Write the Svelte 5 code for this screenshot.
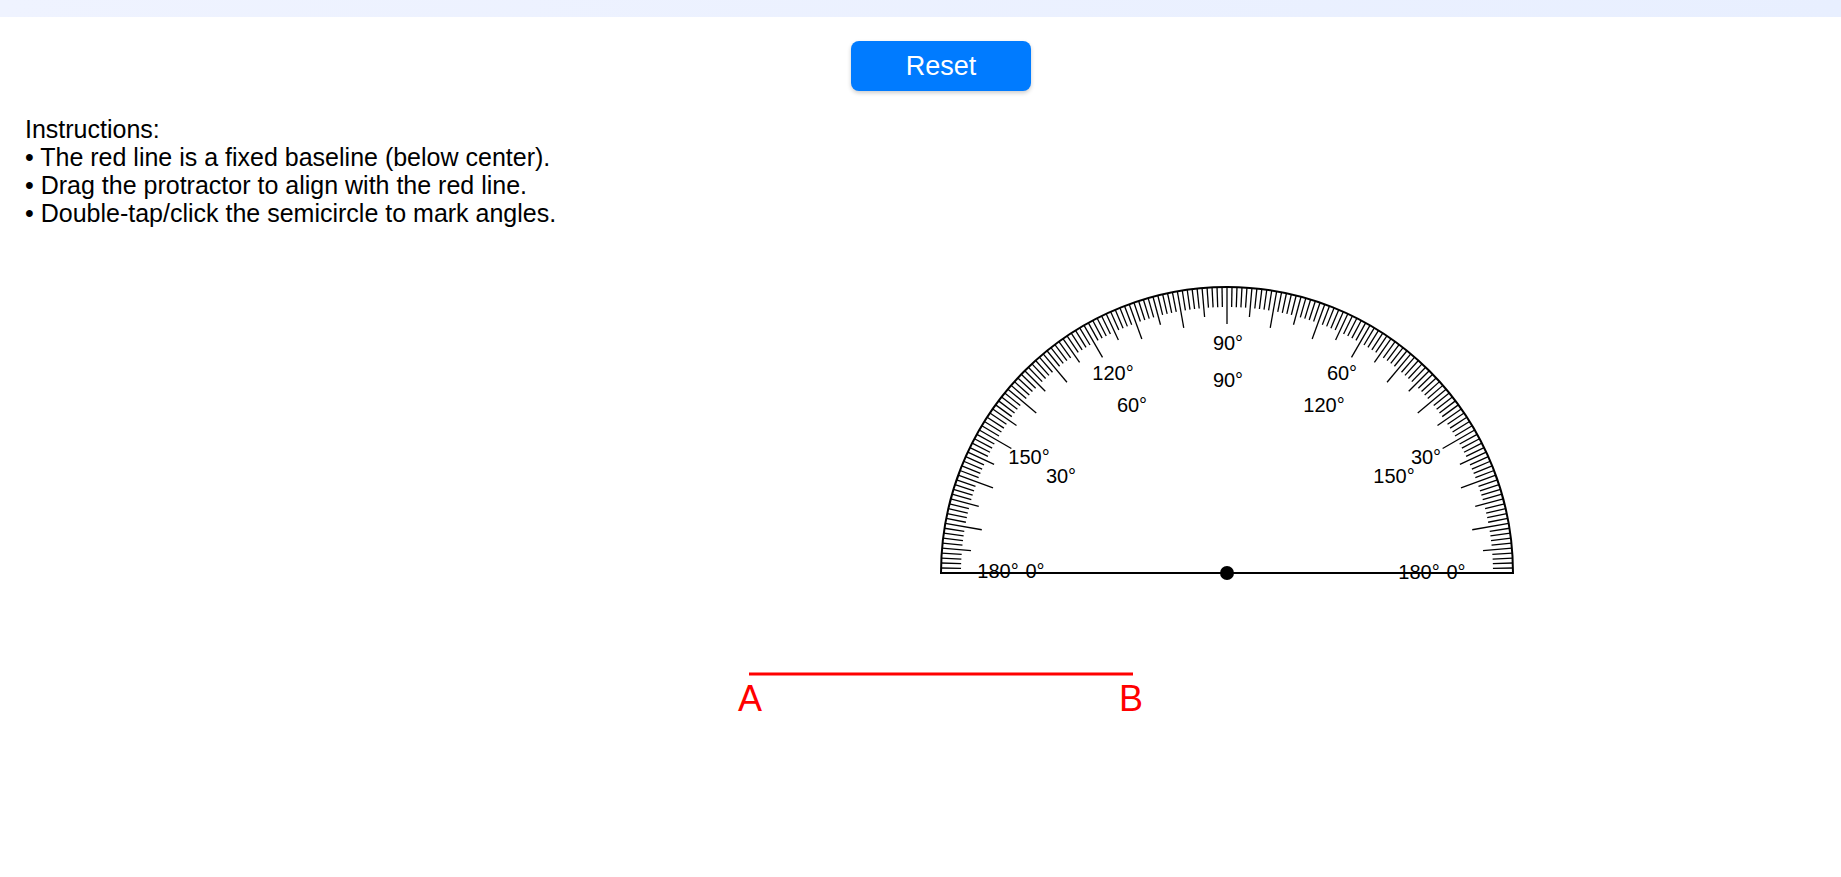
<script>
  const center = { x: 1227, y: 336 };
  const radius = 286;

  const start = { x: 749, y: 437 };
  const end = { x: 1133, y: 437 };

  const instructions = [
    "The red line is a fixed baseline (below center).",
    "Drag the protractor to align with the red line.",
    "Double-tap/click the semicircle to mark angles.",
  ];

  let marks = [];
  let offset = { x: 0, y: 0 };
  let dragFrom = null;
  let stage;

  function polar(deg, r) {
    const rad = (deg * Math.PI) / 180;
    return { x: r * Math.cos(rad), y: -r * Math.sin(rad) };
  }

  function tickLength(deg) {
    if (deg % 10 === 0) return 37;
    if (deg % 5 === 0) return 29;
    return 20;
  }

  const ticks = [];
  for (let deg = 1; deg < 180; deg++) {
    ticks.push({ from: polar(deg, radius), to: polar(deg, radius - tickLength(deg)) });
  }

  const labels = [];
  for (let deg = 0; deg <= 180; deg += 30) {
    labels.push({ text: deg + "°", ...polar(deg, 229) });
    labels.push({ text: 180 - deg + "°", ...polar(deg, 192) });
  }

  // Mouse position in the units of the drawing
  function toStage(e) {
    return new DOMPoint(e.clientX, e.clientY).matrixTransform(stage.getScreenCTM().inverse());
  }

  function handleDown(e) {
    const p = toStage(e);
    dragFrom = { x: p.x - offset.x, y: p.y - offset.y };
  }

  function handleMove(e) {
    if (!dragFrom) return;
    const p = toStage(e);
    offset = { x: p.x - dragFrom.x, y: p.y - dragFrom.y };
  }

  function handleMark(e) {
    const p = toStage(e);
    const dx = p.x - center.x - offset.x;
    const dy = center.y + offset.y - p.y;
    marks = [...marks, Math.round((Math.atan2(dy, dx) * 180) / Math.PI)];
  }

  function reset() {
    marks = [];
    offset = { x: 0, y: 0 };
  }
</script>

<svelte:window on:pointermove={handleMove} on:pointerup={() => (dragFrom = null)} />

<div class="strip"></div>

<main>
  <div class="toolbar">
    <button on:click={reset}>Reset</button>
  </div>

  <div class="instructions">
    <div>Instructions:</div>
    {#each instructions as line}
      <div>• {line}</div>
    {/each}
  </div>

  <svg bind:this={stage} class="stage" viewBox="0 0 1841 620">
    <g class="baseline">
      <line x1={start.x} y1={start.y} x2={end.x} y2={end.y} />
      <text x={start.x + 1} y={start.y + 37}>A</text>
      <text x={end.x - 2} y={end.y + 37}>B</text>
    </g>

    <!-- svelte-ignore a11y_no_static_element_interactions -->
    <g
      class="protractor"
      transform="translate({center.x + offset.x} {center.y + offset.y})"
      on:pointerdown={handleDown}
      on:dblclick={handleMark}
    >
      <path class="outline" d="M{-radius} 0A{radius} {radius} 0 0 1 {radius} 0Z" />
      {#each ticks as { from, to }}
        <line x1={from.x} y1={from.y} x2={to.x} y2={to.y} />
      {/each}
      {#each labels as { text, x, y }}
        <text x={Math.ceil(x)} y={Math.floor(y) + 6}>{text}</text>
      {/each}
      {#each marks as deg}
        <circle class="mark" cx={polar(deg, radius).x} cy={polar(deg, radius).y} r="5" />
      {/each}
      <circle r="7" />
    </g>
  </svg>
</main>

<style>
  :global(body) {
    background: white;
  }

  .strip {
    height: 17px;
    background: linear-gradient(to right, #eff3ff, #e8efff);
  }

  main {
    font-family: Arial, "Liberation Sans", sans-serif;
    color: black;
  }

  .toolbar {
    display: flex;
    justify-content: center;
    padding: 24px 0 24px 41px;
  }

  button {
    width: 180px;
    height: 50px;
    padding: 0;
    border: none;
    border-radius: 8px;
    background: #007bff;
    box-shadow: 0 2px 4px rgba(0, 0, 0, 0.2);
    color: white;
    font-family: inherit;
    font-size: 27px;
    cursor: pointer;
  }

  .instructions {
    padding-left: 25px;
    font-size: 25px;
    line-height: 28px;
  }

  .stage {
    display: block;
    width: 100%;
    height: auto;
    margin-top: 10px;
    user-select: none;
  }

  text {
    text-anchor: middle;
  }

  .baseline line {
    stroke: red;
    stroke-width: 3px;
  }

  .baseline text {
    fill: red;
    font-size: 36px;
  }

  .protractor {
    cursor: grab;
  }

  .protractor line {
    stroke: black;
    stroke-width: 1.3px;
  }

  .protractor text {
    font-size: 20px;
  }

  .outline {
    fill: white;
    stroke: black;
    stroke-width: 2px;
  }

  .mark {
    fill: red;
  }
</style>
